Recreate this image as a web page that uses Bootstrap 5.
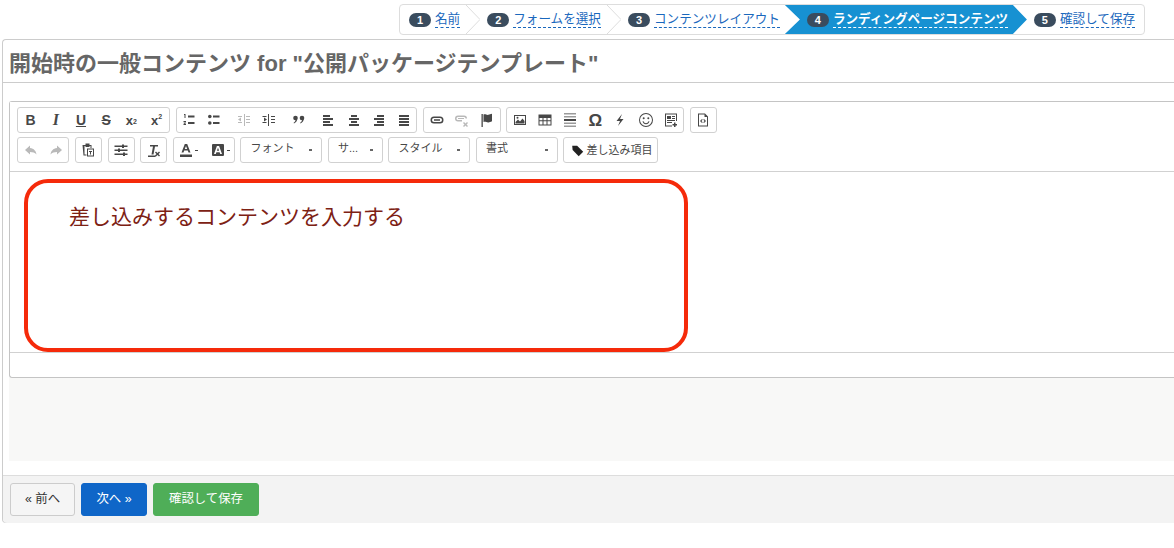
<!DOCTYPE html>
<html lang="ja">
<head>
<meta charset="utf-8">
<title>開始時の一般コンテンツ</title>
<link href="https://cdn.jsdelivr.net/npm/bootstrap@5.3.0/dist/css/bootstrap.min.css" rel="stylesheet">
<style>
html,body{height:548px;overflow:hidden;background:#fff}
body{font-family:"Liberation Sans","Noto Sans CJK JP",sans-serif;font-size:13px;color:#333}
.wiz-wrap{height:39px;padding:4px 29px 0 399px}
.wiz{height:31px;border:1px solid #ddd;border-radius:4px;background:#fff;padding-left:9px}
.wiz-num{width:22px;height:14px;border-radius:7px;background:#3a4c5e;color:#fff;font-size:11px;font-weight:700;line-height:14px;text-align:center;margin-right:4px;flex:none}
.wiz-link{color:#1a68bd;text-decoration:none;font-size:12.6px;line-height:15px;border-bottom:1px dashed #1a68bd;white-space:nowrap}
.wiz-sep{width:14px;height:29px;margin:0 7px 0 6px;flex:none}
.wiz-on{height:29px;margin-left:5px;padding:0 20px 0 22px;background:#1791d2;clip-path:polygon(0 0,228px 0,242px 50%,228px 100%,0 100%,15px 50%);width:242px;flex:none}
.wiz-on .wiz-link{color:#fff;border-color:#fff;font-weight:700}
.wiz-last{margin-left:7px}
.pane{margin:0 -20px 0 2px;height:484px;border:1px solid #ccc;border-radius:4px 0 0 4px;border-right:0}
.pane-title{font-size:22px;font-weight:700;color:#666;margin:0 0 0 6px;line-height:30px;padding-top:9px;height:42px;white-space:nowrap}
.pane-rule{border-top:1px solid #ccc;height:19px}
.ed{margin-left:6px;border:1px solid #c4c4c4;border-right:0;border-radius:3px 0 0 3px;height:277px;position:relative}
.ed-tools{height:70px;background:#fff;border-bottom:1px solid #d1d1d1;padding:5px 7px}
.tb-row{height:26px;gap:5.5px;margin-bottom:4px}
.tb-group{border:1px solid #d1d1d1;border-radius:3px;height:26px;flex:none;color:#474747}
.tb{width:25.2px;height:24px;flex:none;display:flex;align-items:center;justify-content:center;font-size:14px;font-weight:700;line-height:1}
.tb svg{width:16px;height:16px;display:block;fill:currentColor}
.tb-off{color:#b9b9b9}
.tb-gap{width:4.4px;flex:none}
.tb-i{font-family:"Liberation Serif",serif;font-style:italic;font-size:16px}
.tb-small{font-size:13px}
.tb-idx{font-size:7px;font-weight:700}
.tb-omega{font-size:17px}
.tb-combo{width:82px;font-size:11px;font-weight:400;padding-left:9px;color:#474747;line-height:21px;position:relative}
.tb-short{width:55px}
.tb-caret{position:absolute;right:9px;top:11px;width:3px;height:2px;background:#666}
.tb-caret2{width:3px;height:1px;background:#444;margin-left:1px;flex:none}
.tb-color{width:28.6px}
.tb-color + .tb-color{width:31.4px;padding-left:3px}
.tb-tag{width:95px;font-size:11px;gap:2px;padding-left:7px}
.ed-body{height:181px;background:#fff;border-bottom:1px solid #d1d1d1;padding:33px 0 0 59px;font-size:21px;line-height:24px;color:#7d2114;white-space:nowrap}
.ed-foot{height:24px}
.call-out{position:absolute;left:14px;top:77px;width:664px;height:173px;border:4px solid #f52a0a;border-radius:24px}
.gray-block{margin-left:6px;height:83px;background:#f8f8f7}
.gap-block{height:14px}
.pane-foot{height:48px;background:#f3f3f3;border-top:1px solid #ddd;padding:7px 0 0 7px;gap:6px;border-bottom-left-radius:4px}
.act{height:33px;border-radius:3px;font-size:12.4px;line-height:31px;padding:0;border:1px solid transparent;text-align:center}
.act-prev{width:65px;background:#f5f5f5;border-color:#ccc;color:#333}
.act-next{width:66px;background:#0f66c8;color:#fff;border-color:#0f66c8}
.act-save{width:106px;background:#4fae58;color:#fff;border-color:#4fae58}
</style>
</head>
<body>
<div class="wiz-wrap">
  <div class="wiz d-flex align-items-center">
    <span class="wiz-num">1</span><a class="wiz-link" href="#">名前</a>
    <svg class="wiz-sep" viewBox="0 0 14 29" fill="none" stroke="#ddd"><path d="M0 0 14 14.5 0 29"/></svg>
    <span class="wiz-num">2</span><a class="wiz-link" href="#">フォームを選択</a>
    <svg class="wiz-sep" viewBox="0 0 14 29" fill="none" stroke="#ddd"><path d="M0 0 14 14.5 0 29"/></svg>
    <span class="wiz-num">3</span><a class="wiz-link" href="#">コンテンツレイアウト</a>
    <div class="wiz-on d-flex align-items-center"><span class="wiz-num">4</span><a class="wiz-link" href="#">ランディングページコンテンツ</a></div>
    <span class="wiz-num wiz-last">5</span><a class="wiz-link" href="#">確認して保存</a>
  </div>
</div>
<div class="pane">
  <h1 class="pane-title">開始時の一般コンテンツ for "公開パッケージテンプレート"</h1>
  <div class="pane-rule"></div>
  <div class="ed">
    <div class="ed-tools">
      <div class="tb-row d-flex">
        <div class="tb-group d-flex">
          <span class="tb">B</span><span class="tb tb-i">I</span><span class="tb text-decoration-underline">U</span><span class="tb text-decoration-line-through">S</span>
          <span class="tb tb-small">x<sub class="tb-idx">2</sub></span><span class="tb tb-small">x<sup class="tb-idx">2</sup></span>
        </div>
        <div class="tb-group d-flex">
          <span class="tb"><svg viewBox="0 0 16 16"><path d="M7 3.500h6.500v2H7zM7 10h6.500v2H7zM3 2h1.500v4H3.500V3H3zM2.500 9h2.500v1l-1.500 1.500H5V13H2.500v-1L4 10.300H2.500z"/></svg></span>
          <span class="tb"><svg viewBox="0 0 16 16"><circle cx="3.800" cy="4.500" r="1.800"/><circle cx="3.800" cy="11" r="1.800"/><path d="M7 3.500h6.500v2H7zM7 10h6.500v2H7z"/></svg></span>
          <span class="tb-gap"></span>
          <span class="tb tb-off"><svg viewBox="0 0 16 16"><path d="M8 2h1v12H8zM10 4h4v1h-4zM10 7h4v1h-4zM10 10h4v1h-4zM2 4h4v1H2zM2 10h4v1H2zM2 7.500 5 5.500v4z"/></svg></span>
          <span class="tb"><svg viewBox="0 0 16 16"><path d="M7 2h1v12H7zM10 4h4v1h-4zM10 7h4v1h-4zM10 10h4v1h-4zM1.500 4h4v1h-4zM1.500 10h4v1h-4zM6 7.500 3 5.500v4z"/></svg></span>
          <span class="tb-gap"></span>
          <span class="tb"><svg viewBox="0 0 16 16"><circle cx="4.500" cy="6" r="2.300"/><circle cx="11" cy="6" r="2.300"/><path d="M5.300 5c1.700 1.500 1 5-2.300 6.500l-.4-.8c1.600-1 2.200-2.300 2-4zM11.800 5c1.700 1.500 1 5-2.300 6.500l-.4-.8c1.600-1 2.200-2.300 2-4z"/></svg></span>
          <span class="tb-gap"></span>
          <span class="tb"><svg viewBox="0 0 16 16"><path d="M3 3h7v2H3zM3 6h10v2H3zM3 9h7v2H3zM3 12h10v2H3z"/></svg></span>
          <span class="tb"><svg viewBox="0 0 16 16"><path d="M5 3h6v2H5zM3 6h10v2H3zM5 9h6v2H5zM3 12h10v2H3z"/></svg></span>
          <span class="tb"><svg viewBox="0 0 16 16"><path d="M6 3h7v2H6zM3 6h10v2H3zM6 9h7v2H6zM3 12h10v2H3z"/></svg></span>
          <span class="tb"><svg viewBox="0 0 16 16"><path d="M3 3h10v2H3zM3 6h10v2H3zM3 9h10v2H3zM3 12h10v2H3z"/></svg></span>
        </div>
        <div class="tb-group d-flex">
          <span class="tb"><svg viewBox="0 0 16 16"><path d="M5 4.500h6a3.500 3.500 0 0 1 0 7H5a3.500 3.500 0 0 1 0-7zm0 1.500a2 2 0 0 0 0 4h6a2 2 0 0 0 0-4zm0 1.300h6v1.400H5z"/></svg></span>
          <span class="tb tb-off"><svg viewBox="0 0 16 16"><path d="M4 3.500h6a3 3 0 0 1 3 3h-1.500A1.500 1.500 0 0 0 10 5H4a1.500 1.500 0 0 0 0 3h4v1.500H4a3 3 0 0 1 0-6zM4 6h6v1H4zM10 10l1.500 1.500L13 10l1 1-1.500 1.500L14 14l-1 1-1.500-1.500L10 15l-1-1 1.500-1.500L9 11z"/></svg></span>
          <span class="tb"><svg viewBox="0 0 16 16"><path d="M2.500 2h1.300v13H2.500zM4.500 2.500c2-.8 3 .8 5 .3.900-.2 2-.5 3.500-1v7.500c-1.500.6-2.500 1-3.500 1.100-2 .2-3-1.200-5-.4z"/></svg></span>
        </div>
        <div class="tb-group d-flex">
          <span class="tb"><svg viewBox="0 0 16 16"><path d="M2 3h12v10H2zm1 1v8h10V4zM3.500 11.500V10L6 7.500 8 9.500l2.500-3L12.500 9v2.500z"/><circle cx="5.500" cy="5.800" r="1"/></svg></span>
          <span class="tb"><svg viewBox="0 0 16 16"><path d="M1.500 2.500h13v11h-13zm1 3.500v2.200h3V6zm4 0v2.200h3V6zm4 0v2.200h3V6zm-8 3.200v3.300h3V9.200zm4 0v3.300h3V9.200zm4 0v3.300h3V9.200z"/></svg></span>
          <span class="tb"><svg viewBox="0 0 16 16"><path d="M2 1h12v1.500H2zM2 4h12v1.500H2zM2 10.500h12V12H2zM2 13.500h12V15H2z" opacity=".55"/><path d="M2 7h12v2H2z"/></svg></span>
          <span class="tb tb-omega">Ω</span>
          <span class="tb"><svg viewBox="0 0 16 16"><path d="M10 2 4.500 9H8l-2 5 5.500-7H8z"/></svg></span>
          <span class="tb"><svg viewBox="0 0 16 16"><path fill-rule="evenodd" d="M8 1a7 7 0 1 1 0 14A7 7 0 0 1 8 1zm0 1a6 6 0 1 0 0 12A6 6 0 0 0 8 2z"/><circle cx="5.700" cy="6.200" r="1"/><circle cx="10.300" cy="6.200" r="1"/><path d="M4.500 9.300h1c.5 1.300 1.400 1.900 2.500 1.900s2-.6 2.500-1.900h1C11 11.200 9.700 12.200 8 12.200S5 11.200 4.500 9.300z"/></svg></span>
          <span class="tb"><svg viewBox="0 0 16 16"><path fill-rule="evenodd" d="M2 1.500h12V9h-1V2.500H3v11h6v1H2z"/><path d="M4 4h4v3H4zM9 4h3v1H9zM9 6h3v1H9zM4 8h8v1H4zM4 10h5v1H4zM11 10.500h1.500V12H14v1.500h-1.500V15H11v-1.500H9.500V12H11z"/></svg></span>
        </div>
        <div class="tb-group d-flex">
          <span class="tb"><svg viewBox="0 0 16 16"><path fill-rule="evenodd" d="M3 1.500h7l3 3v10H3zm1 1v11h8V5H9.500V2.500z"/><path d="M7 7 5 9l2 2 .7-.7L6.400 9l1.300-1.300zM9 7l2 2-2 2-.7-.7L9.600 9 8.300 7.700z"/></svg></span>
        </div>
      </div>
      <div class="tb-row d-flex">
        <div class="tb-group d-flex">
          <span class="tb tb-off"><svg viewBox="0 0 16 16"><path d="M7 3.500 2 8l5 4.500V10c2.800 0 4.800.7 6.500 2.500C13 9 11 6.500 7 6z"/></svg></span>
          <span class="tb tb-off"><svg viewBox="0 0 16 16"><path d="M9 3.500 14 8l-5 4.500V10c-2.800 0-4.800.7-6.500 2.500C3 9 5 6.500 9 6z"/></svg></span>
        </div>
        <div class="tb-group d-flex">
          <span class="tb"><svg viewBox="0 0 16 16"><path fill-rule="evenodd" d="M2.500 3h3V1.500h4V3h2v3h-1V4h-1v1h-4V4h-1v8.500h2v1h-3z"/><path fill-rule="evenodd" d="M7 6.500h7v8H7zm1 1v6h5v-6z"/><path d="M9 9h3v1h-1v2.500h-1V10H9z"/></svg></span>
        </div>
        <div class="tb-group d-flex">
          <span class="tb"><svg viewBox="0 0 16 16"><path d="M1.500 3.500h13V5h-13zM1.500 7.500h13V9h-13zM1.500 11.500h13V13h-13zM9 2.500h2v3.500H9zM5 6.500h2V10H5zM10 10.500h2V14h-2z"/></svg></span>
        </div>
        <div class="tb-group d-flex">
          <span class="tb"><svg viewBox="0 0 16 16"><path d="M2 13.500h7.500V15H2zM4 3h8v1.500H9l-1.500 8h-2l1.500-8H4zM10 9.500l1.500 1.500L13 9.500l1 1L12.500 12l1.500 1.500-1 1-1.500-1.500L10 14.500l-1-1 1.500-1.500L9 10.500z"/></svg></span>
        </div>
        <div class="tb-group d-flex">
          <span class="tb tb-color"><svg viewBox="0 0 16 16"><path fill-rule="evenodd" d="M6.800 2h2.400l3.300 8.500h-2L9.800 8.500H6.200l-.7 2h-2zM8 3.900 6.800 7h2.400z"/><path d="M2 12.500h12V15H2z"/></svg><span class="tb-caret2"></span></span>
          <span class="tb tb-color"><svg viewBox="0 0 16 16"><path fill-rule="evenodd" d="M3 2h10a1 1 0 0 1 1 1v10a1 1 0 0 1-1 1H3a1 1 0 0 1-1-1V3a1 1 0 0 1 1-1zm3.900 2L4 12h1.800l.6-1.800h3.200l.6 1.800H12L9.100 4zM8 5.800l1.100 3H6.900z"/></svg><span class="tb-caret2"></span></span>
        </div>
        <div class="tb-group tb-combo">フォント<span class="tb-caret"></span></div>
        <div class="tb-group tb-combo tb-short">サ...<span class="tb-caret"></span></div>
        <div class="tb-group tb-combo">スタイル<span class="tb-caret"></span></div>
        <div class="tb-group tb-combo">書式<span class="tb-caret"></span></div>
        <div class="tb-group tb-tag d-flex align-items-center">
          <svg width="13" height="13" viewBox="0 0 16 16" fill="#222"><path d="M1.500 2h6L15 9.500 9.500 15 2 7.500z"/></svg>差し込み項目
        </div>
      </div>
    </div>
    <div class="ed-body">差し込みするコンテンツを入力する</div>
    <div class="ed-foot"></div>
    <div class="call-out"></div>
  </div>
  <div class="gray-block"></div>
  <div class="gap-block"></div>
  <div class="pane-foot d-flex">
    <button type="button" class="act act-prev">« 前へ</button>
    <button type="button" class="act act-next">次へ »</button>
    <button type="button" class="act act-save">確認して保存</button>
  </div>
</div>
<script src="https://cdn.jsdelivr.net/npm/bootstrap@5.3.0/dist/js/bootstrap.bundle.min.js"></script>
</body>
</html>
